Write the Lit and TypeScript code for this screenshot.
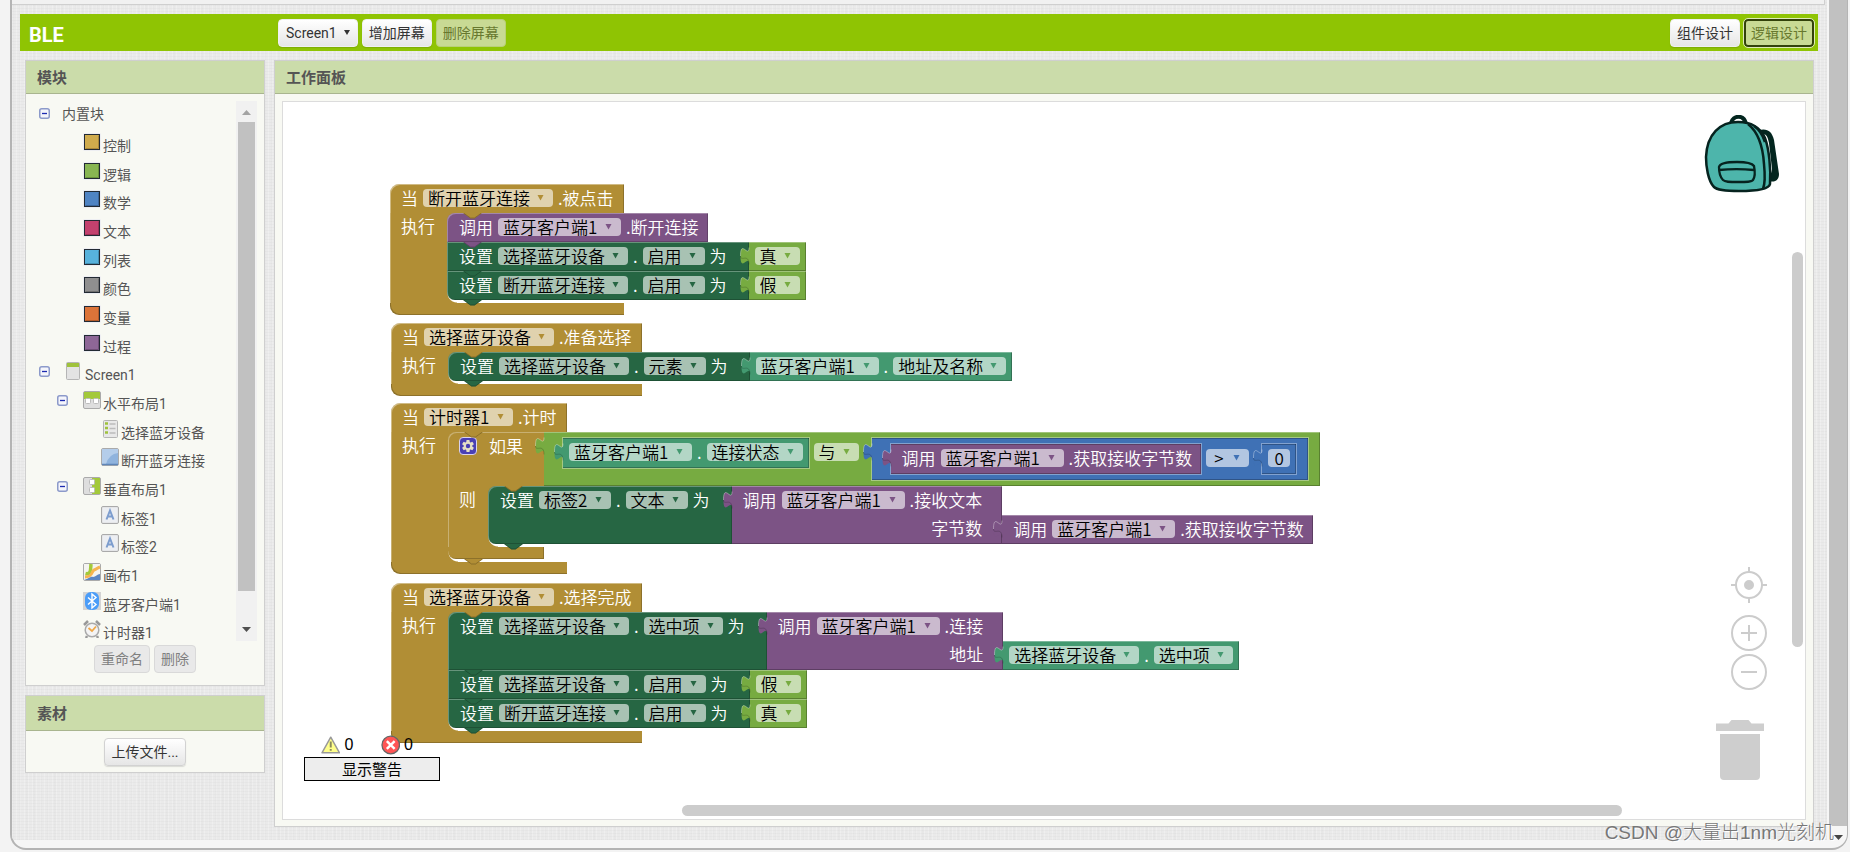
import { LitElement, html, svg, css, nothing, TemplateResult } from "lit";
import { customElement } from "lit/decorators.js";

type Part = TemplateResult | typeof nothing;

/* ---------- shared block pieces ---------- */

const label = (text: string) => html`<span class="lbl">${text}</span>`;

const drop = (text: string, name = text, kind = "") => html`
  <span class="pill ${kind}"><select aria-label=${name}><option>${text}</option></select
    ><svg class="caret" width="7" height="6" viewBox="0 0 7 6"><path d="M0.500 0h6L3.500 5.500z" fill="currentColor" /></svg
  ></span>`;

const plug = html`<svg class="plug" width="10" height="24" viewBox="0 0 10 24">
  <path d="M10 5.5H9C9 16.8 0.5-3.4 0.5 14S9 11.200 9 22.400h1z" fill="currentColor" />
  <path d="M9 5.500C9 16.800 0.500-3.400 0.500 14" fill="none" stroke="#fff" stroke-opacity=".35" />
  <path d="M0.500 14C0.500 20 9 11 9 22.400" fill="none" stroke="#000" stroke-opacity=".18" />
</svg>`;

const notch = html`<svg class="notch" width="19" height="6" viewBox="0 0 19 6">
  <path d="M0 0h19l-7.500 5.500h-4z" fill="currentColor" />
  <path d="M0.500 0l7 5h4l7-5" fill="none" stroke="#000" stroke-opacity=".22" />
</svg>`;

const value = (tone: string, parts: Part) => html`<div class="value ${tone}">${plug}${parts}</div>`;

const property = (component: string, prop: string) =>
  value("teal", html`${drop(component)}${label(".")}${drop(prop)}`);

const bool = (text: string) => value("logic", drop(text));

const call = (component: string, method: string) =>
  value("proc", html`${label("调用")}${drop(component)}${label("." + method)}`);

const callWith = (component: string, method: string, arg: string, input: Part) => html`
  <div class="callwith proc">
    ${plug}
    <div class="stem">${label("调用")}${drop(component)}${label("." + method)}</div>
    <div class="argrow"><div class="arg">${label(arg)}</div>${input}</div>
  </div>`;

const setter = (component: string, prop: string, input: Part) => html`
  <div class="stmt set">
    <div class="stem">${label("设置")}${drop(component)}${label(".")}${drop(prop)}${label("为")}</div>
    ${input}${notch}
  </div>`;

const callStmt = (component: string, method: string) => html`
  <div class="stmt proc">
    <div class="stem short">${label("调用")}${drop(component)}${label("." + method)}</div>
    ${notch}
  </div>`;

const stack = (body: Part) => html`<div class="stack control">${notch}${body}</div>`;

const event = (x: number, y: number, component: string, name: string, body: Part) => html`
  <section class="event control" style="left:${x}px;top:${y}px">
    <div class="head">${label("当")}${drop(component)}${label("." + name)}</div>
    <div class="mid"><div class="arm">${label("执行")}</div>${stack(body)}</div>
    <div class="foot"></div>
  </section>`;

const gear = html`<button class="gear" aria-label="设置">
  <svg width="18" height="18" viewBox="0 0 18 18">
    <rect x=".5" y=".5" width="17" height="17" rx="3.500" fill="#4a3fb4" stroke="#d9d2ee" />
    ${[0, 60, 120].map((a) => svg`<rect x="7.300" y="3" width="3.400" height="12" rx=".8" fill="#e6dfc6" transform="rotate(${a} 9 9)" />`)}
    <circle cx="9" cy="9" r="4.300" fill="#e6dfc6" /><circle cx="9" cy="9" r="2.200" fill="#4a3fb4" />
  </svg>
</button>`;

const ifBlock = (test: Part, body: Part) => html`
  <div class="stmt ifblock control">
    <div class="iftop"><div class="ifhead">${gear}${label("如果")}</div>${test}</div>
    <div class="iftop"><div class="ifarm">${label("则")}</div>${stack(body)}</div>
    <div class="iffoot"></div>
    ${notch}
  </div>`;

@customElement("block-workspace")
export class BlockWorkspace extends LitElement {
  static styles = css`
    :host { display: block; position: relative; overflow: hidden; background: #fff; font-family: "Noto Sans", "Noto Sans CJK SC", sans-serif; font-size: 17px; line-height: 18px; font-weight: 350; }
    .control { --c: #b18e35; }
    .proc { --c: #7c5385; }
    .set { --c: #266643; }
    .logic { --c: #77ab41; }
    .teal { --c: #439970; }
    .math { --c: #3f71b5; }
    .lbl { color: #fff; white-space: nowrap; font-family: "Noto Sans CJK SC", sans-serif; line-height: 18px; }
    .pill { position: relative; display: inline-flex; height: 18px; color: var(--c); }
    select, .num { appearance: none; border: 0; margin: 0; height: 18px; border-radius: 4px; background: rgba(255, 255, 255, .6); color: #000; font: inherit; font-family: "Noto Sans CJK SC", sans-serif; padding: 0 23px 0 5px; outline: 0; }
    .num { width: 22px; padding: 0; text-align: center; background: #b2c6e1; }
    .cmp select { padding-left: 8px; padding-right: 25px; }
    .caret { position: absolute; right: 9px; top: 6px; pointer-events: none; }
    .plug { position: absolute; left: -9px; top: 0; color: var(--c); }
    .notch { position: absolute; left: 16px; bottom: -6px; z-index: 2; color: var(--c); }
    .stack > .notch { top: 0; bottom: auto; }

    .event { position: absolute; }
    .head { display: flex; gap: 5px; height: 24px; padding: 5px 10px 0 11px; background: var(--c); border-radius: 9px 0 0 0; box-shadow: inset 1px 1px 0 rgba(255, 255, 255, .4), inset -1px 0 0 rgba(0, 0, 0, .2); }
    .mid { display: flex; width: 0; min-width: 100%; }
    .arm { flex: none; box-sizing: border-box; width: 57px; padding: 4px 0 0 11px; background: var(--c); box-shadow: inset 1px 0 0 rgba(255, 255, 255, .3); }
    .foot { height: 12px; background: var(--c); border-radius: 0 0 0 9px; box-shadow: inset 1px -1px 0 rgba(0, 0, 0, .2); }
    .stack { position: relative; display: flex; flex-direction: column; align-items: flex-start; flex: none; padding-bottom: 3px;
      background:
        linear-gradient(var(--c), var(--c)) 0 0 / 10px 10px no-repeat,
        radial-gradient(circle at 10px 0, transparent 9px, var(--c) 10px) 0 100% / 10px 10px no-repeat; }

    .stmt { position: relative; display: flex; }
    .stem { display: flex; gap: 5px; box-sizing: border-box; min-height: 29px; padding: 5px 22px 0 12px; background: var(--c); box-shadow: inset 1px 1px 0 rgba(255, 255, 255, .3), inset -1px -1px 0 rgba(0, 0, 0, .2); }
    .stem.short { padding-right: 9px; }
    .stack > .notch + .stmt > .stem, .iftop:first-child > .ifhead { border-top-left-radius: 8px; }
    .stack > .stmt:last-child > .stem { border-bottom-left-radius: 8px; }

    .value { position: relative; display: flex; gap: 5px; box-sizing: border-box; height: 29px; padding: 5px 6px 0; background: var(--c); box-shadow: inset 0 1px 0 rgba(255, 255, 255, .3), inset -1px -1px 0 rgba(0, 0, 0, .25); }
    .value.proc { padding: 5px 9px 0 11px; }
    .callwith { position: relative; background: var(--c); box-shadow: inset -1px -1px 0 rgba(0, 0, 0, .25); }
    .callwith > .stem { box-shadow: inset 0 1px 0 rgba(255, 255, 255, .3), inset -1px 0 0 rgba(0, 0, 0, .25); padding-left: 11px; padding-right: 20px; }
    .argrow { display: flex; width: 0; min-width: 100%; }
    .arg { flex: none; box-sizing: border-box; width: 100%; height: 29px; padding: 4px 20px 0 0; text-align: right; }
    .argrow > .value { flex: none; }

    .ifblock { flex-direction: column; align-items: flex-start; }
    .iftop { display: flex; }
    .ifhead { display: flex; gap: 12px; box-sizing: border-box; width: 96px; padding: 5px 0 0 11px; background: var(--c); box-shadow: inset 1px 1px 0 rgba(255, 255, 255, .3); }
    .ifarm { box-sizing: border-box; width: 40px; padding: 4px 0 0 11px; background: var(--c); box-shadow: inset 1px 0 0 rgba(255, 255, 255, .3); }
    .iffoot { width: 96px; height: 12px; background: var(--c); border-radius: 0 0 0 8px; box-shadow: inset -1px -1px 0 rgba(0, 0, 0, .2); }
    .gear { border: 0; background: none; padding: 0; width: 18px; height: 18px; }
    .gear svg { display: block; }

    .value.op { height: auto; padding: 6px 12px 6px 19px; }
    .op > .value { height: 30px; box-shadow: inset 0 1px 0 rgba(0, 0, 0, .25), inset -1px -1px 0 rgba(0, 0, 0, .25), 0 0 0 1px rgba(255, 255, 255, .35); }
    .op > .value.op { height: auto; }
    .op > .pill { margin-top: 5px; }
    .op > .pill + .value { margin-left: 8px; }

    .bar { position: absolute; background: #ccc; border-radius: 6px; }
    .bar.v { right: 2px; top: 150px; bottom: 172px; width: 11px; }
    .bar.h { bottom: 3px; left: 26.2%; right: 12%; height: 11px; }
    .backpack { position: absolute; right: 25px; top: 13px; }
    .tools { position: absolute; right: 38px; bottom: 126px; display: flex; flex-direction: column; }
    .tools button { border: 0; padding: 0; background: none; height: 36px; margin-bottom: 3px; }
    .tools button:first-child { margin-bottom: 12px; }
    .tools svg { display: block; }
    .trash { position: absolute; right: 41px; bottom: 38px; }
    .status { position: absolute; left: 21px; bottom: 38px; width: 136px; color: #000; }
    .counts { display: flex; align-items: center; padding-left: 17px; height: 24px; font: 16px/20px "Liberation Sans", sans-serif; }
    .counts span { width: 41px; padding-left: 4px; box-sizing: border-box; }
    .warn { display: block; width: 100%; height: 24px; border: 1px solid #000; background: #ededed; padding: 0; font: 15px/20px "Noto Sans CJK SC", sans-serif; color: #000; }
  `;

  render() {
    const client = "蓝牙客户端1";
    const picker = "选择蓝牙设备";
    const off = "断开蓝牙连接";
    return html`
      ${event(107, 82, off, "被点击", html`
        ${callStmt(client, "断开连接")}
        ${setter(picker, "启用", bool("真"))}
        ${setter(off, "启用", bool("假"))}`)}
      ${event(108, 221, picker, "准备选择", setter(picker, "元素", property(client, "地址及名称")))}
      ${event(108, 301, "计时器1", "计时", ifBlock(
        html`<div class="value op logic">${plug}
          ${property(client, "连接状态")}${drop("与")}
          <div class="value op math">${plug}
            ${call(client, "获取接收字节数")}${drop(">", "比较", "cmp")}
            <div class="value math">${plug}<input class="num" aria-label="数字" value="0" /></div>
          </div>
        </div>`,
        setter("标签2", "文本", callWith(client, "接收文本", "字节数", call(client, "获取接收字节数")))))}
      ${event(108, 481, picker, "选择完成", html`
        ${setter(picker, "选中项", callWith(client, "连接", "地址", property(picker, "选中项")))}
        ${setter(picker, "启用", bool("假"))}
        ${setter(off, "启用", bool("真"))}`)}

      <svg class="backpack" width="76" height="80" viewBox="0 0 76 80">
        <path d="M55 15c8-2 13 1 15 10l5 34c0 6-4 9-10 7l-1-4c2-1 3-3 2.500-6l-4-30c-1-5-3-6-6-5z" fill="#03261f" />
        <path d="M60 19c3 1 4 4 5 9l3 26c0 3-1 5-3 5 0-14-2-30-5-40z" fill="#fff" />
        <path d="M27 8c2-8 13-9 15 1" fill="none" stroke="#03261f" stroke-width="4" />
        <path d="M34 7c14 0 22 5 27 16 4 11 6 30 5 46-1 5-12 7-31 7-13 0-22-1-25-4C4 66 2 51 2 42 3 19 16 7 34 7z" fill="#4db5ab" stroke="#06231f" stroke-width="2.500" />
        <path d="M44 9c10 8 15 24 16 40 1 10 1 20-1 25M50 11c6 4 9 10 11 16" fill="none" stroke="#06231f" stroke-width="2.500" />
        <path d="M15 52c1-4 8-5 18-5s15 1 17 4c1 5 1 11-1 14-1 2-7 2-15 2-9 0-13 0-15-2-3-3-4-9-4-13z M15 55c10-1 25-1 35 0" fill="none" stroke="#06231f" stroke-width="2.300" />
      </svg>

      <div class="tools">
        <button aria-label="居中"><svg width="36" height="36" viewBox="0 0 36 36" fill="none" stroke="#ccc" stroke-width="2"><circle cx="18" cy="18" r="13" /><circle cx="18" cy="18" r="4" fill="#ccc" /><path d="M18 0v5M18 31v5M0 18h5M31 18h5" /></svg></button>
        <button aria-label="放大"><svg width="36" height="36" viewBox="0 0 36 36" fill="none" stroke="#ccc" stroke-width="2"><circle cx="18" cy="18" r="17" /><path d="M18 10v16M10 18h16" /></svg></button>
        <button aria-label="缩小"><svg width="36" height="36" viewBox="0 0 36 36" fill="none" stroke="#ccc" stroke-width="2"><circle cx="18" cy="18" r="17" /><path d="M10 18h16" /></svg></button>
      </div>
      <svg class="trash" width="48" height="61" viewBox="0 0 48 61" fill="#cecece"><path d="M0 3.500h12.500L15.500 0h17l3 3.500H48V11H0zM4 14h40v42q0 4-4 4H8q-4 0-4-4z" /></svg>
      <div class="bar v"></div>
      <div class="bar h"></div>

      <div class="status">
        <div class="counts">
          <svg width="20" height="18" viewBox="0 0 20 18"><path d="M10 1l9 16H1z" fill="#ffff8c" stroke="#999" stroke-width="1.500" stroke-linejoin="round" /><path d="M10 5.500v6M10 13v2" stroke="#8b8b5a" stroke-width="2" /></svg>
          <span>0</span>
          <svg width="20" height="20" viewBox="0 0 20 20"><circle cx="10" cy="10" r="9" fill="#f55" stroke="#666" stroke-width="1.300" /><path d="M6 6l8 8M14 6l-8 8" stroke="#fff" stroke-width="2.500" /></svg>
          <span>0</span>
        </div>
        <button class="warn">显示警告</button>
      </div>
    `;
  }
}

/* ---------- tree data ---------- */

interface Row { level: 0 | 1 | 2; text: string; icon?: TemplateResult; open?: boolean; }

const box = (fill: string, edge: string) => html`<svg width="18" height="18" viewBox="0 0 18 18">
  <rect x=".5" y=".5" width="17" height="17" fill="#e1e4f2" /><rect x="1.500" y="1.500" width="15" height="15" fill=${fill} stroke="#222a33" />
  <path d="M2.500 15.500h13v-13" fill="none" stroke=${edge} /></svg>`;
const tile = (inner: TemplateResult) => html`<svg width="18" height="18" viewBox="0 0 18 18"><rect x=".5" y=".5" width="17" height="17" rx="1.500" fill="#dedede" stroke="#aaa" />${inner}</svg>`;
const letterA = tile(svg`<rect x="1.500" y="1.500" width="15" height="15" fill="#eceef2" /><path d="M5.500 13.500L9 4.500l3.500 9M6.800 10.500h4.400" fill="none" stroke="#7d9dce" stroke-width="2" />`);

const rows: Row[] = [
  { level: 0, text: "内置块", open: true },
  { level: 1, text: "控制", icon: box("#cfab4c", "#a8873a") },
  { level: 1, text: "逻辑", icon: box("#88b652", "#6a943c") },
  { level: 1, text: "数学", icon: box("#4f84c3", "#3b669c") },
  { level: 1, text: "文本", icon: box("#c3416e", "#9b3057") },
  { level: 1, text: "列表", icon: box("#57b2dc", "#428eb1") },
  { level: 1, text: "颜色", icon: box("#8f8f8f", "#6f6f6f") },
  { level: 1, text: "变量", icon: box("#dc7439", "#b35b2a") },
  { level: 1, text: "过程", icon: box("#8e6797", "#6f4e77") },
  { level: 0, text: "Screen1", open: true, icon: html`<svg width="18" height="18" viewBox="0 0 18 18"><rect x="1.500" y=".5" width="13" height="17" rx="1" fill="#e3e3e3" stroke="#b5b5b5" /><path d="M2 1h12v4H2z" fill="#9fc23c" /></svg>` },
  { level: 1, text: "水平布局1", open: true, icon: tile(svg`<path d="M1 1h16v7H1z" fill="#a3c93a" /><rect x="2.500" y="7.500" width="5" height="5" rx="1" fill="#fff" stroke="#bbb" /><rect x="10.500" y="7.500" width="5" height="5" rx="1" fill="#fff" stroke="#bbb" />`) },
  { level: 2, text: "选择蓝牙设备", icon: html`<svg width="18" height="18" viewBox="0 0 18 18"><rect x="2.500" y=".5" width="14" height="17" rx="1" fill="#e8e8e8" stroke="#b5b5b5" /><path d="M4 3.500h3M4 8h3M4 12.500h3" stroke="#9fc23c" stroke-width="2.500" /><path d="M8.500 4h6M8.500 8.500h6M8.500 13h6" stroke="#bbb" stroke-width="1.500" /></svg>` },
  { level: 2, text: "断开蓝牙连接", icon: tile(svg`<path d="M1 1h16v15H1z" fill="#8fb3dd" /><path d="M1 1h16v4Q8 6 5 16H1z" fill="#b4cdea" /><path d="M1 16.500h16" stroke="#5f86b8" stroke-width="1.500" />`) },
  { level: 1, text: "垂直布局1", open: true, icon: tile(svg`<path d="M9 1h8v16H9z" fill="#a3c93a" /><rect x="6.500" y="2.500" width="5" height="5" rx="1" fill="#fff" stroke="#bbb" /><rect x="6.500" y="10.500" width="5" height="5" rx="1" fill="#fff" stroke="#bbb" />`) },
  { level: 2, text: "标签1", icon: letterA },
  { level: 2, text: "标签2", icon: letterA },
  { level: 1, text: "画布1", icon: tile(svg`<path d="M1 1h16v16H1z" fill="#f4f4f0" /><path d="M2.500 10.500c6 1.500 5-5 5.500-9.500" fill="none" stroke="#a3c93a" stroke-width="3.500" /><path d="M2 14c8 0 6-5 9-7 3-1 3-2 6-3" fill="none" stroke="#f6b450" stroke-width="3" /><path d="M1 17c5-1 6-4 9-3 3 0 4-3 7-3v6z" fill="#5b86c4" />`) },
  { level: 1, text: "蓝牙客户端1", icon: html`<svg width="18" height="18" viewBox="0 0 18 18"><rect width="18" height="18" fill="#d4d4d4" /><rect x="2" width="14" height="18" rx="6" fill="#4b9df8" /><path d="M5 5.500l8 7-4 3.500V2l4 3.500-8 7" fill="none" stroke="#fff" stroke-width="1.400" /></svg>` },
  { level: 1, text: "计时器1", icon: html`<svg width="18" height="18" viewBox="0 0 18 18"><path d="M1 5l4-4M17 5l-4-4M4 16l-1 2M14 16l1 2" stroke="#999" stroke-width="2.500" /><circle cx="9" cy="10" r="6.800" fill="#f4f4f4" stroke="#aaa" stroke-width="1.500" /><path d="M5.500 8L9 11l4-4.500" fill="none" stroke="#f0a848" stroke-width="1.800" /></svg>` },
];

@customElement("app-root")
export class AppRoot extends LitElement {
  static styles = css`
    :host { display: block; box-sizing: border-box; height: 100vh; padding: 0 2px 2px 10px; background: #f3f3f3; overflow: hidden; font: 14px/16px Roboto, "Noto Sans CJK SC", sans-serif; color: #555; position: relative; }
    .frame { display: flex; box-sizing: border-box; height: 100%; border: 2px solid #b4b4b4; border-top: 0; border-right-width: 1px; border-radius: 0 0 16px 16px; background: #f6f6f6; overflow: hidden; }
    .page { flex: 1; min-width: 0; display: flex; flex-direction: column; margin-bottom: 8px; padding-bottom: 13px; box-sizing: border-box;
      background-color: #eaeaea;
      background-image: repeating-linear-gradient(0deg, rgba(0, 0, 0, .02) 0 1px, transparent 1px 3px), repeating-linear-gradient(90deg, rgba(255, 255, 255, .25) 0 1px, transparent 1px 4px), repeating-linear-gradient(90deg, rgba(0, 0, 0, .01) 0 2px, transparent 2px 7px); }
    .strip { height: 4px; margin-right: 2px; background: #f1f1f1; border: solid #cfcfcf; border-width: 0 1px 1px 0; }
    .side-scroll { width: 18px; display: flex; flex-direction: column; border-left: 2px solid #f6f6f6; }
    .side-thumb { flex: 1; background: #c1c1c1; }
    .side-end { height: 22px; display: flex; align-items: center; justify-content: center; }

    .bar { display: flex; align-items: center; gap: 4px; margin: 9px 9px 0 8px; height: 37px; padding: 0 4px 0 9px; background: #8fc403; box-sizing: border-box; }
    h1 { flex: none; width: 245px; margin: 0; padding-top: 4px; font-size: 20px; line-height: 24px; color: #fff; font-weight: 700; }
    .spacer { flex: 1; }
    button { box-sizing: border-box; height: 28px; padding: 0 6px; border: 1px solid #d2d2d2; border-radius: 4px; background: linear-gradient(#fff, #e6e6e6); font: 14px/18px Roboto, "Noto Sans CJK SC", sans-serif; color: #333; box-shadow: 0 1px 1px rgba(0, 0, 0, .12); }
    .bar button { border-color: #f0f0f0; }
    .bar .screen { padding: 0 7px; display: flex; align-items: center; gap: 7px; }
    .bar .pale { background: #c8da94; border-color: #b9d079; color: #67782f; box-shadow: none; }
    .bar .current { background: #c8da94; border: 2px solid #32420a; outline: 1px solid #dfeab8; color: #67782f; padding: 0 5px; box-shadow: none; }
    .off { background: #e9e9e9; border-color: #d9d9d9; color: #808080; box-shadow: none; }

    .cols { flex: 1; min-height: 0; display: flex; gap: 9px; margin: 9px 13px 0 13px; align-items: stretch; }
    .left { width: 240px; flex: none; display: flex; flex-direction: column; gap: 9px; }
    .panel { box-sizing: border-box; border: 1px solid #cfcfcf; background: #f8f9f3; }
    h2 { margin: 0; box-sizing: border-box; height: 33px; padding: 9px 11px; font-size: 15px; line-height: 16px; font-weight: 700; color: #555; background: #cbdcaa; border-bottom: 1px solid #a9b58f; }
    .assets h2 { height: 35px; padding-top: 10px; }
    .main { flex: 1; min-width: 0; display: flex; flex-direction: column; }
    .main block-workspace { flex: 1; margin: 7px 7px 6px; border: 1px solid #dcdcdc; }

    .scroller { display: flex; height: 540px; margin-top: 7px; overflow: hidden; }
    ul { flex: 1; margin: -1px 0 0; padding: 0; list-style: none; }
    li { display: flex; align-items: flex-start; gap: 2px; box-sizing: border-box; height: 29px; padding-top: 4px; color: #555; }
    li:nth-child(3n) { height: 28px; }
    .l0 { padding-left: 13px; }
    .l1 { padding-left: 31px; }
    .l2 { padding-left: 49px; }
    .twist { width: 24px; height: 18px; display: flex; align-items: center; flex: none; }
    .toggle { height: 11px; width: 11px; padding: 0; border: 0; background: none; box-shadow: none; }
    li svg { display: block; flex: none; }
    .name { padding-top: 5px; white-space: nowrap; text-decoration: none; color: inherit; }
    .plain { padding-top: 2px; margin-left: -3px; }
    .track { width: 21px; margin-right: 7px; box-sizing: border-box; padding: 0 2px; background: #f1f1f1; display: flex; flex-direction: column; align-items: center; }
    .track svg { height: 21px; }
    .thumb { width: 17px; height: 469px; background: #c1c1c1; }
    .track svg:last-child { margin-top: 29px; }
    .row { display: flex; justify-content: center; gap: 4px; padding: 4px 0 12px; }
    .assets .row { padding: 7px 0 6px; }

    .mark { position: absolute; right: 16px; bottom: 6px; font: 300 19px/26px "Liberation Sans", "Noto Sans CJK SC", sans-serif; color: #777; text-shadow: 1px 1px 0 #fff; pointer-events: none; }
  `;

  render() {
    return html`
      <div class="frame">
        <div class="page">
          <div class="strip"></div>
          <header class="bar">
            <h1>BLE</h1>
            <button class="screen">Screen1 <svg width="6" height="5" viewBox="0 0 6 5"><path d="M0 0h6L3 5z" fill="#333" /></svg></button>
            <button>增加屏幕</button>
            <button class="pale">删除屏幕</button>
            <span class="spacer"></span>
            <button>组件设计</button>
            <button class="current">逻辑设计</button>
          </header>
          <div class="cols">
            <aside class="left">
              <section class="panel">
                <h2>模块</h2>
                <div class="scroller">
                  <ul>
                    ${rows.map((r) => html`
                      <li class="l${r.level}">
                        <span class="twist">${r.open
                          ? html`<button class="toggle" aria-label="折叠"><svg width="11" height="11" viewBox="0 0 11 11"><rect x=".75" y=".75" width="9.500" height="9.500" rx="2" fill="#f4f5fb" stroke="#8c9aca" stroke-width="1.500" /><path d="M3 5.500h5" stroke="#1d2bb0" stroke-width="1.300" /></svg></button>`
                          : nothing}</span>
                        ${r.icon ?? nothing}
                        <a class="name ${r.icon ? "" : "plain"}" href="#">${r.text}</a>
                      </li>`)}
                  </ul>
                  <div class="track">
                    <svg width="9" height="21" viewBox="0 0 9 21"><path d="M0 14l4.500-5L9 14z" fill="#a3a3a3" /></svg>
                    <div class="thumb"></div>
                    <svg width="9" height="21" viewBox="0 0 9 21"><path d="M0 7l4.500 5L9 7z" fill="#505050" /></svg>
                  </div>
                </div>
                <div class="row"><button class="off">重命名</button><button class="off">删除</button></div>
              </section>
              <section class="panel assets">
                <h2>素材</h2>
                <div class="row"><button>上传文件...</button></div>
              </section>
            </aside>
            <main class="panel main">
              <h2>工作面板</h2>
              <block-workspace></block-workspace>
            </main>
          </div>
        </div>
        <div class="side-scroll">
          <div class="side-thumb"></div>
          <div class="side-end"><svg width="9" height="5" viewBox="0 0 9 5"><path d="M0 0h9L4.500 5z" fill="#444" /></svg></div>
        </div>
      </div>
      <div class="mark">CSDN @大量出1nm光刻机</div>
    `;
  }
}
